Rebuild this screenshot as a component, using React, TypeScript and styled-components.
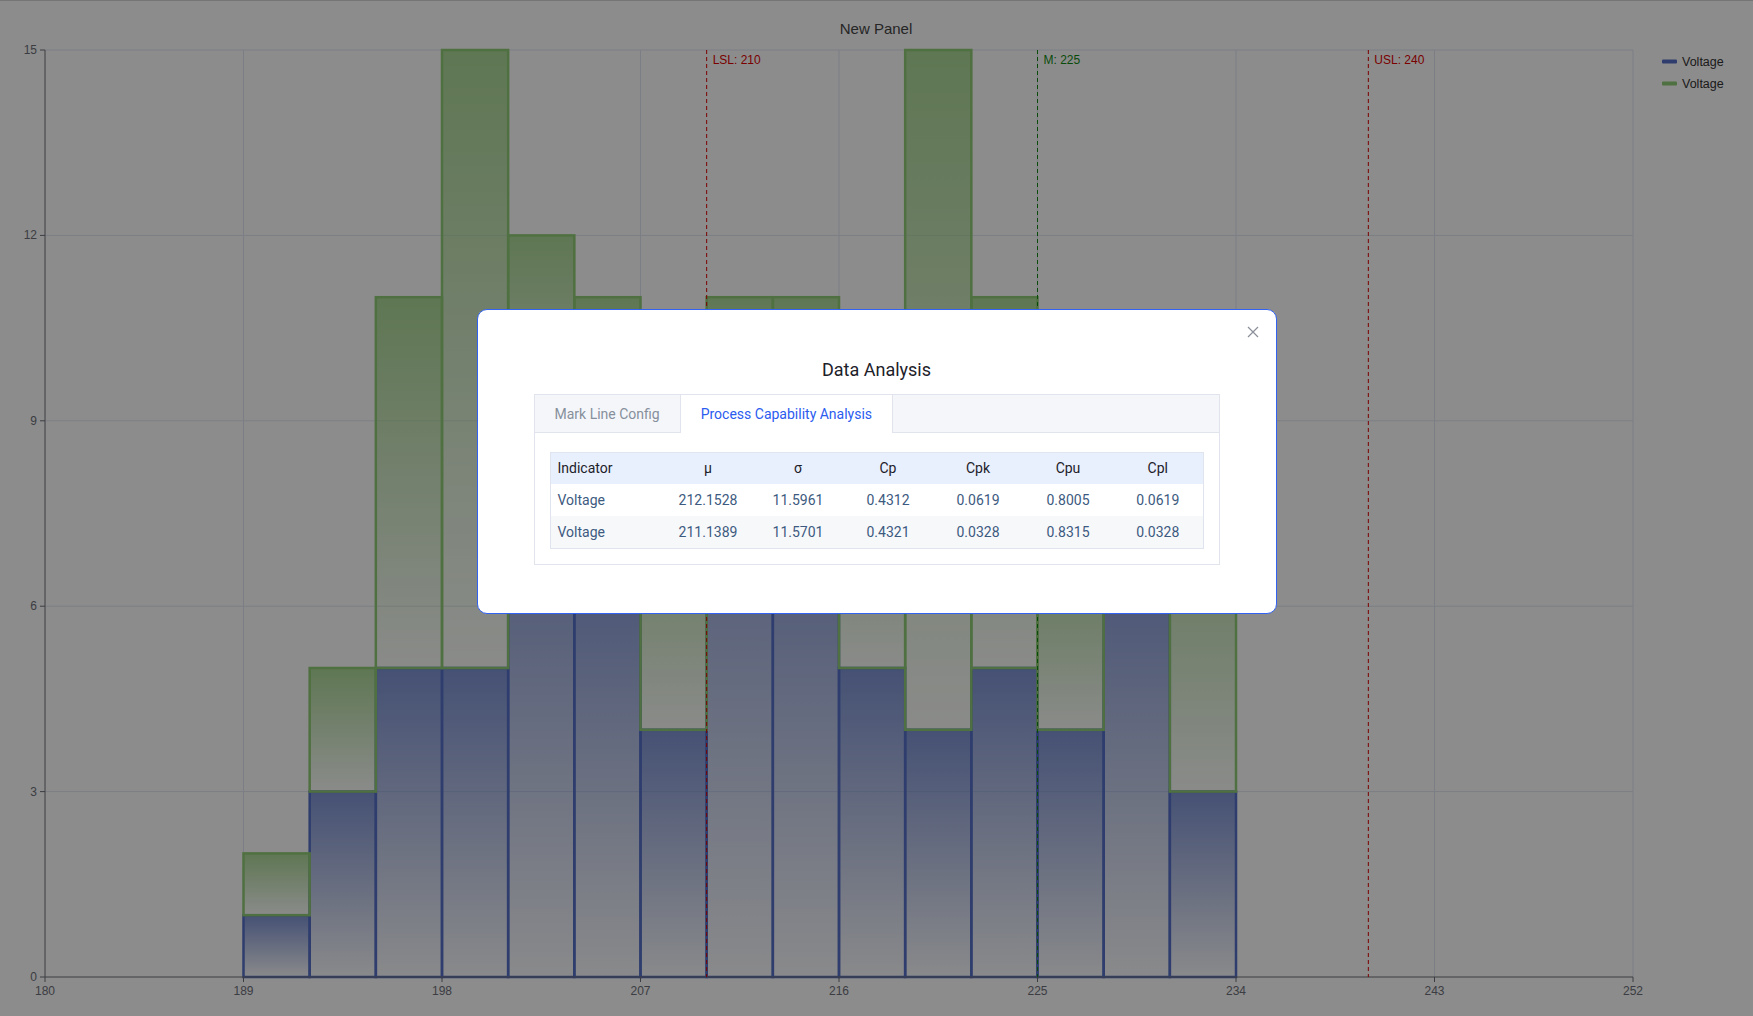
import React from 'react';
import styled, { createGlobalStyle } from 'styled-components';

const GlobalStyle = createGlobalStyle`
  html, body {
    margin: 0;
    padding: 0;
    height: 100%;
    overflow: hidden;
    background: #fff;
  }
  body {
    font-family: Roboto, "Liberation Sans", Arial, sans-serif;
  }
`;

// chart geometry (page is 1753 x 1016)
const W = 1753;
const H = 1016;
const LEFT = 45;
const RIGHT = 1633;
const TOP = 50;
const BOTTOM = 977;
const xOf = (v: number) => LEFT + ((v - 180) * (RIGHT - LEFT)) / 72;
const yOf = (c: number) => BOTTOM - (c * (BOTTOM - TOP)) / 15;

const BLUE = '#5470c6';
const GREEN = '#91cc75';
const AXIS = '#6e7079';
const SPLIT = '#e0e6f1';

// bins of 3 from 189 to 234
const blueCounts = [1, 3, 5, 5, 8, 7, 4, 9, 8, 5, 4, 5, 4, 7, 3];
const greenTops = [2, 5, 11, 15, 12, 11, 8, 11, 11, 9, 15, 11, 7, 9, 8];

const markLines = [
  { value: 210, label: 'LSL: 210', color: '#e00000' },
  { value: 225, label: 'M: 225', color: '#128a12' },
  { value: 240, label: 'USL: 240', color: '#e00000' },
];

const rows = [
  { name: 'Voltage', mu: '212.1528', sigma: '11.5961', cp: '0.4312', cpk: '0.0619', cpu: '0.8005', cpl: '0.0619' },
  { name: 'Voltage', mu: '211.1389', sigma: '11.5701', cp: '0.4321', cpk: '0.0328', cpu: '0.8315', cpl: '0.0328' },
];

const Page = styled.div`
  position: relative;
  width: 100vw;
  height: 100vh;
  background: #fff;
  box-shadow: inset 0 1px 0 #d6d6d6;
`;

const ChartSvg = styled.svg`
  display: block;
  width: 100%;
  height: 100%;
  font-family: "Liberation Sans", Arial, sans-serif;
`;

const Mask = styled.div`
  position: fixed;
  inset: 0;
  background: rgba(0, 0, 0, 0.45);
  display: flex;
  justify-content: center;
  align-items: flex-start;
  padding-top: 309px;
  box-sizing: border-box;
`;

const Modal = styled.div`
  position: relative;
  width: 800px;
  box-sizing: border-box;
  background: #fff;
  border: 1px solid #3162f2;
  border-radius: 10px;
  padding: 47px 56px 48px;
`;

const CloseButton = styled.button`
  position: absolute;
  top: 16px;
  right: 17px;
  width: 12px;
  height: 12px;
  padding: 0;
  border: none;
  background: transparent;
  cursor: pointer;
  display: flex;
`;

const Title = styled.h2`
  margin: 0 0 11px;
  text-align: center;
  font-size: 18px;
  font-weight: 400;
  line-height: 26px;
  color: #1d2129;
`;

const TabBox = styled.div`
  border: 1px solid #e1e4ec;
`;

const TabBar = styled.div`
  display: flex;
  height: 38px;
  box-sizing: border-box;
  background: #f5f6fa;
  border-bottom: 1px solid #e1e4ec;
`;

const Tab = styled.div<{ $active?: boolean }>`
  padding: 0 20px;
  height: ${(p) => (p.$active ? '38px' : '37px')};
  line-height: 38px;
  font-size: 14px;
  color: ${(p) => (p.$active ? '#2b5cf0' : '#86909c')};
  background: ${(p) => (p.$active ? '#fff' : 'transparent')};
  border-right: 1px solid #e1e4ec;
  cursor: pointer;
  white-space: nowrap;
`;

const TabPanel = styled.div`
  padding: 19px 15px 15px;
`;

const Table = styled.table`
  width: 100%;
  border-collapse: collapse;
  table-layout: fixed;
  border: 1px solid #dfe4ee;
  font-size: 14px;
`;

const Th = styled.th<{ $first?: boolean }>`
  box-sizing: border-box;
  height: 31px;
  padding: 0 0 0 ${(p) => (p.$first ? '7px' : '0')};
  width: ${(p) => (p.$first ? '113px' : 'auto')};
  background: #e8effd;
  font-weight: 400;
  color: #1d2129;
  text-align: ${(p) => (p.$first ? 'left' : 'center')};
`;

const Tr = styled.tr<{ $striped?: boolean }>`
  background: ${(p) => (p.$striped ? '#f7f8fa' : '#fff')};
`;

const Td = styled.td<{ $first?: boolean }>`
  height: 32px;
  padding: 0 0 0 ${(p) => (p.$first ? '7px' : '0')};
  color: #3d5a80;
  text-align: ${(p) => (p.$first ? 'left' : 'center')};
`;

const Chart: React.FC = () => {
  const binW = (3 * (RIGHT - LEFT)) / 72;
  const xTicks = [180, 189, 198, 207, 216, 225, 234, 243, 252];
  const yTicks = [0, 3, 6, 9, 12, 15];

  return (
    <ChartSvg viewBox={`0 0 ${W} ${H}`}>
      <defs>
        <linearGradient id="blueFill" x1="0" y1="0" x2="0" y2="1">
          <stop offset="0" stopColor={BLUE} stopOpacity={0.75} />
          <stop offset="1" stopColor={BLUE} stopOpacity={0.03} />
        </linearGradient>
        <linearGradient id="greenFill" x1="0" y1="0" x2="0" y2="1">
          <stop offset="0" stopColor={GREEN} stopOpacity={0.75} />
          <stop offset="1" stopColor={GREEN} stopOpacity={0.03} />
        </linearGradient>
      </defs>

      <text x={876} y={34} textAnchor="middle" fontSize={15} fill="#464646">
        New Panel
      </text>

      {/* split lines */}
      {yTicks.slice(1).map((t) => (
        <line key={'h' + t} x1={LEFT} x2={RIGHT} y1={yOf(t)} y2={yOf(t)} stroke={SPLIT} strokeWidth={1} />
      ))}
      {xTicks.slice(1).map((t) => (
        <line key={'v' + t} x1={xOf(t)} x2={xOf(t)} y1={TOP} y2={BOTTOM} stroke={SPLIT} strokeWidth={1} />
      ))}

      {/* bars */}
      {blueCounts.map((c, i) => {
        const x = xOf(189 + 3 * i);
        return (
          <rect
            key={'b' + i}
            x={x}
            y={yOf(c)}
            width={binW}
            height={yOf(0) - yOf(c)}
            fill="url(#blueFill)"
            stroke={BLUE}
            strokeWidth={2.5}
          />
        );
      })}
      {greenTops.map((top, i) => {
        const x = xOf(189 + 3 * i);
        const base = blueCounts[i];
        return (
          <rect
            key={'g' + i}
            x={x}
            y={yOf(top)}
            width={binW}
            height={yOf(base) - yOf(top)}
            fill="url(#greenFill)"
            stroke={GREEN}
            strokeWidth={2.5}
          />
        );
      })}

      {/* axes */}
      <line x1={LEFT} x2={LEFT} y1={TOP} y2={BOTTOM} stroke={AXIS} strokeWidth={1} />
      <line x1={LEFT} x2={RIGHT} y1={BOTTOM} y2={BOTTOM} stroke={AXIS} strokeWidth={1} />
      {yTicks.map((t) => (
        <g key={'yt' + t}>
          <line x1={LEFT - 5} x2={LEFT} y1={yOf(t)} y2={yOf(t)} stroke={AXIS} />
          <text x={LEFT - 8} y={yOf(t) + 4} textAnchor="end" fontSize={12} fill={AXIS}>
            {t}
          </text>
        </g>
      ))}
      {xTicks.map((t) => (
        <g key={'xt' + t}>
          <line x1={xOf(t)} x2={xOf(t)} y1={BOTTOM} y2={BOTTOM + 5} stroke={AXIS} />
          <text x={xOf(t)} y={BOTTOM + 18} textAnchor="middle" fontSize={12} fill={AXIS}>
            {t}
          </text>
        </g>
      ))}

      {/* mark lines */}
      {markLines.map((m) => (
        <g key={m.label}>
          <line
            x1={xOf(m.value)}
            x2={xOf(m.value)}
            y1={TOP}
            y2={BOTTOM}
            stroke={m.color}
            strokeWidth={1}
            strokeDasharray="4 3"
          />
          <text x={xOf(m.value) + 6} y={TOP + 14} fontSize={12} fill={m.color}>
            {m.label}
          </text>
        </g>
      ))}

      {/* legend */}
      {[BLUE, GREEN].map((c, i) => (
        <g key={'lg' + i}>
          <rect x={1662} y={59.5 + i * 22} width={15} height={4} rx={1} fill={c} />
          <text x={1682} y={66 + i * 22} fontSize={12.5} fill="#333">
            Voltage
          </text>
        </g>
      ))}
    </ChartSvg>
  );
};

const App: React.FC = () => {
  return (
    <>
      <GlobalStyle />
      <Page>
        <Chart />
        <Mask>
          <Modal>
            <CloseButton aria-label="close">
              <svg width="12" height="12" viewBox="0 0 12 12">
                <path d="M1 1L11 11M11 1L1 11" stroke="#8a8f99" strokeWidth="1.2" fill="none" />
              </svg>
            </CloseButton>
            <Title>Data Analysis</Title>
            <TabBox>
              <TabBar>
                <Tab>Mark Line Config</Tab>
                <Tab $active>Process Capability Analysis</Tab>
              </TabBar>
              <TabPanel>
                <Table>
                  <thead>
                    <tr>
                      <Th $first>Indicator</Th>
                      <Th>μ</Th>
                      <Th>σ</Th>
                      <Th>Cp</Th>
                      <Th>Cpk</Th>
                      <Th>Cpu</Th>
                      <Th>Cpl</Th>
                    </tr>
                  </thead>
                  <tbody>
                    {rows.map((r, i) => (
                      <Tr key={i} $striped={i % 2 === 1}>
                        <Td $first>{r.name}</Td>
                        <Td>{r.mu}</Td>
                        <Td>{r.sigma}</Td>
                        <Td>{r.cp}</Td>
                        <Td>{r.cpk}</Td>
                        <Td>{r.cpu}</Td>
                        <Td>{r.cpl}</Td>
                      </Tr>
                    ))}
                  </tbody>
                </Table>
              </TabPanel>
            </TabBox>
          </Modal>
        </Mask>
      </Page>
    </>
  );
};

export default App;
